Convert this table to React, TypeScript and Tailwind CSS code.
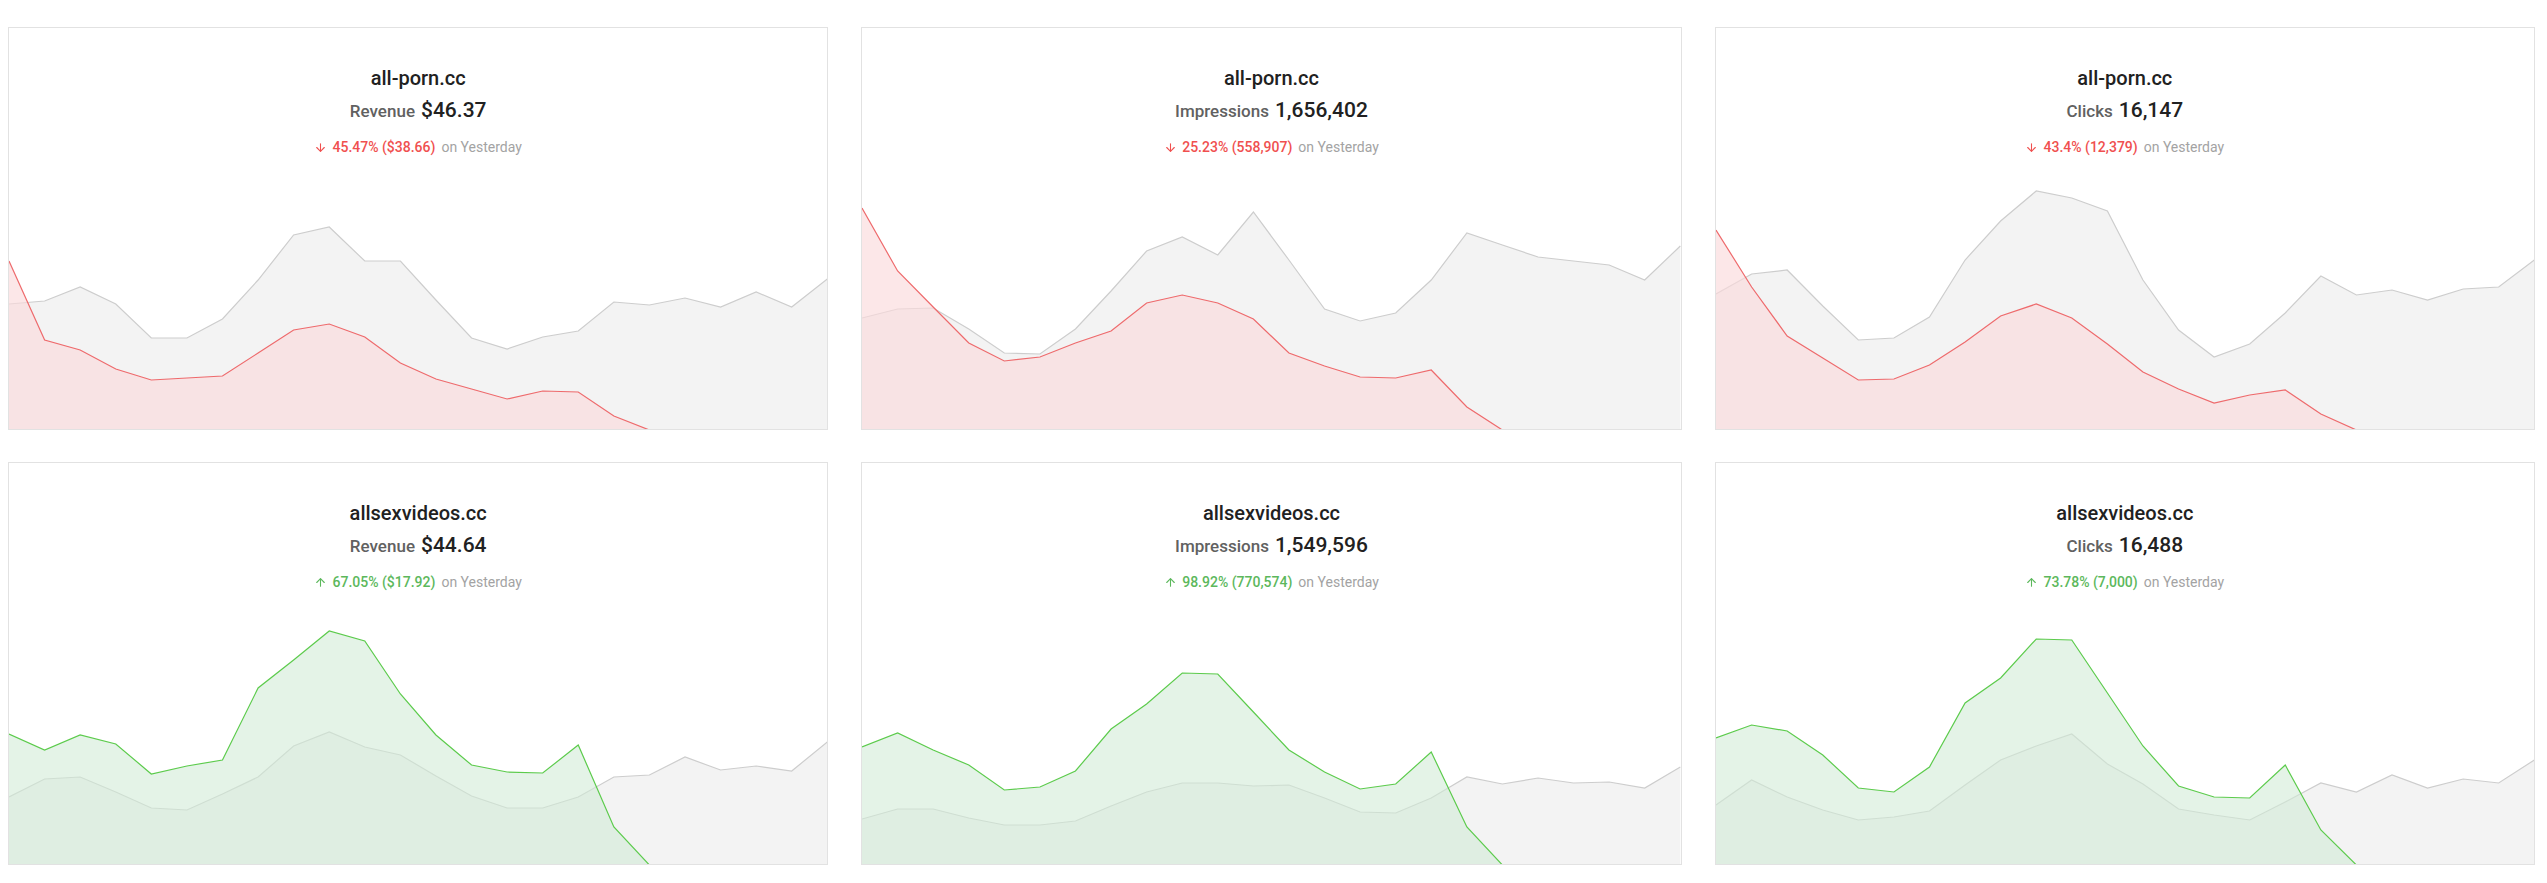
import React from "react";
import { ArrowDown, ArrowUp } from "lucide-react";

type Card = {
  site: string;
  label: string;
  value: string;
  change: string;
  up: boolean;
  prev: number[]; // grey series, y in card px
  cur: number[]; // colored series, y in card px
};

const cards: Card[] = [
  {
    site: "all-porn.cc",
    label: "Revenue",
    value: "$46.37",
    change: "45.47% ($38.66)",
    up: false,
    prev: [277, 274, 260, 277, 311, 311, 292, 253, 208, 200, 234, 234, 273, 311, 322, 310, 304, 275, 278, 271, 280, 265, 280, 252],
    cur: [234, 313, 323, 342, 353, 351, 349, 326, 303, 297, 310, 336, 352, 362, 372, 364, 365, 389, 403],
  },
  {
    site: "all-porn.cc",
    label: "Impressions",
    value: "1,656,402",
    change: "25.23% (558,907)",
    up: false,
    prev: [291, 282, 281, 302, 326, 327, 302, 264, 224, 210, 228, 185, 233, 282, 294, 286, 253, 206, 218, 230, 234, 238, 253, 219],
    cur: [181, 244, 280, 316, 334, 330, 316, 304, 276, 268, 276, 292, 326, 339, 350, 351, 343, 380, 403],
  },
  {
    site: "all-porn.cc",
    label: "Clicks",
    value: "16,147",
    change: "43.4% (12,379)",
    up: false,
    prev: [267, 247, 243, 279, 313, 311, 290, 233, 194, 164, 171, 184, 253, 303, 330, 317, 286, 249, 268, 263, 273, 262, 260, 233],
    cur: [203, 260, 309, 331, 353, 352, 338, 315, 289, 277, 291, 317, 345, 362, 376, 368, 363, 387, 403],
  },
  {
    site: "allsexvideos.cc",
    label: "Revenue",
    value: "$44.64",
    change: "67.05% ($17.92)",
    up: true,
    prev: [335, 317, 315, 330, 346, 348, 332, 315, 284, 270, 285, 293, 314, 334, 346, 346, 335, 315, 313, 295, 308, 304, 309, 280],
    cur: [272, 288, 273, 282, 312, 304, 298, 226, 198, 169, 179, 232, 273, 303, 310, 311, 283, 365, 403],
  },
  {
    site: "allsexvideos.cc",
    label: "Impressions",
    value: "1,549,596",
    change: "98.92% (770,574)",
    up: true,
    prev: [357, 347, 347, 356, 363, 363, 359, 344, 330, 321, 321, 324, 323, 336, 350, 351, 336, 315, 322, 316, 321, 320, 326, 305],
    cur: [285, 271, 288, 303, 328, 325, 309, 267, 242, 211, 212, 250, 288, 310, 327, 322, 290, 365, 403],
  },
  {
    site: "allsexvideos.cc",
    label: "Clicks",
    value: "16,488",
    change: "73.78% (7,000)",
    up: true,
    prev: [343, 318, 335, 348, 358, 355, 349, 323, 298, 284, 272, 302, 322, 347, 353, 358, 340, 321, 330, 313, 326, 317, 321, 298],
    cur: [276, 263, 269, 293, 326, 330, 305, 241, 216, 177, 178, 231, 284, 324, 335, 336, 303, 368, 403],
  },
];

const W = 820;
const STEP = W / 23;
const BOTTOM = 403;

const linePath = (ys: number[]) =>
  ys.map((y, i) => `${i === 0 ? "M" : "L"}${(i * STEP).toFixed(1)},${y}`).join(" ");

const areaPath = (ys: number[]) =>
  `${linePath(ys)} L${((ys.length - 1) * STEP).toFixed(1)},${BOTTOM} L0,${BOTTOM} Z`;

const Chart = ({ prev, cur, up }: { prev: number[]; cur: number[]; up: boolean }) => {
  const stroke = up ? "#5ccb4c" : "#ee6a6c";
  const fill = up ? "rgba(209,234,214,0.58)" : "rgba(251,218,220,0.65)";
  return (
    <svg
      viewBox={`0 152 ${W} 250`}
      preserveAspectRatio="none"
      className="block w-full h-[250px] mt-auto"
    >
      <path d={areaPath(prev)} fill="#f3f3f3" />
      <path d={linePath(prev)} fill="none" stroke="#cdcdcd" strokeWidth={1.2} />
      <path d={areaPath(cur)} fill={fill} />
      <path d={linePath(cur)} fill="none" stroke={stroke} strokeWidth={1.2} />
    </svg>
  );
};

const StatCard = ({ card }: { card: Card }) => {
  const Arrow = card.up ? ArrowUp : ArrowDown;
  return (
    <div className="h-[403px] flex flex-col bg-white border border-[#e2e2e2] overflow-hidden">
      <div className="pt-[38px] flex flex-col items-center text-center">
        <h2 className="text-[20px] leading-[24px] font-medium text-[#212121]">{card.site}</h2>
        <div className="mt-[6px] leading-[28px] flex items-baseline gap-[6px]">
          <span className="text-[17px] font-medium text-[#616161]">{card.label}</span>
          <span className="text-[21px] font-medium text-[#212121]">{card.value}</span>
        </div>
        <div className="mt-[12px] leading-[20px] text-[14px] flex items-center">
          <span
            className={
              card.up
                ? "flex items-center font-medium text-[#5cb85c]"
                : "flex items-center font-medium text-[#f0504f]"
            }
          >
            <Arrow size={13} strokeWidth={2} className="mr-[5px]" />
            {card.change}
          </span>
          <span className="ml-[6px] text-[#a3a3a3]">on Yesterday</span>
        </div>
      </div>
      <Chart prev={card.prev} cur={card.cur} up={card.up} />
    </div>
  );
};

export default function App() {
  return (
    <main
      className="min-h-screen bg-white pl-2 pr-3 pt-[27px]"
      style={{ fontFamily: "Roboto, 'Liberation Sans', sans-serif" }}
    >
      <div className="grid grid-cols-3 gap-x-[33px] gap-y-[32px]">
        {cards.map((c, i) => (
          <StatCard key={i} card={c} />
        ))}
      </div>
    </main>
  );
}
